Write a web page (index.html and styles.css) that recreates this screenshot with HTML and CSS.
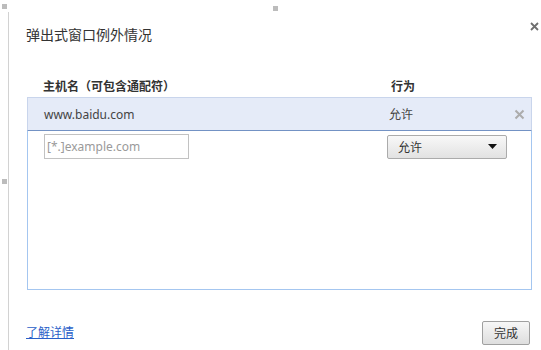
FILE: index.html
```html
<!DOCTYPE html>
<html lang="zh-CN">
<head>
<meta charset="utf-8">
<title>弹出式窗口例外情况</title>
<link rel="stylesheet" href="styles.css">
</head>
<body>
<span class="handle handle-tl"></span>
<span class="handle handle-top"></span>
<span class="handle handle-left"></span>
<div class="frame">
  <div class="title">弹出式窗口例外情况</div>
  <button class="close" aria-label="关闭">
    <svg width="9" height="9" viewBox="0 0 9 9"><path d="M1 1L8 8M8 1L1 8" stroke="#6f6f6f" stroke-width="1.8"/></svg>
  </button>
  <div class="head">
    <span>主机名（可包含通配符）</span>
    <span>行为</span>
  </div>
  <div class="list">
    <div class="row selected">
      <span class="host">www.baidu.com</span>
      <span class="act">允许</span>
      <span class="del">
        <svg width="11" height="11" viewBox="0 0 11 11"><path d="M1.5 1.5L9.5 9.5M9.5 1.5L1.5 9.5" stroke="#acacac" stroke-width="2"/></svg>
      </span>
    </div>
    <div class="rest">
      <div class="row edit">
        <input class="field" type="text" placeholder="[*.]example.com">
        <div class="select">
          <span>允许</span>
          <svg width="9" height="5" viewBox="0 0 9 5"><path d="M0 0H9L4.5 5Z" fill="#111"/></svg>
        </div>
      </div>
    </div>
  </div>
  <div class="foot">
    <a class="link" href="#">了解详情</a>
    <button class="done">完成</button>
  </div>
</div>
</body>
</html>
```
FILE: styles.css
```css
* { box-sizing: border-box; }
html, body {
  margin: 0;
  padding: 0;
  width: 541px;
  height: 350px;
  overflow: hidden;
  background: #fff;
  font-family: "Noto Sans", "Noto Sans CJK SC", sans-serif;
  color: #333;
  font-size: 12px;
}
body { padding-top: 12px; }
.handle {
  position: absolute;
  width: 5px;
  height: 5px;
  background: #bcbcbc;
}
.handle-tl { left: 2px; top: 4px; }
.handle-top { left: 273px; top: 6px; }
.handle-left { left: 2px; top: 179px; }

.frame {
  position: relative;
  margin-left: 8px;
  height: 338px;
  border-left: 1px solid #d2d2d2;
  padding: 13px 10px 0 17px;
}
.title {
  line-height: 20px;
  font-size: 14px;
  color: #333;
}
.close {
  position: absolute;
  right: 1px;
  top: 9px;
  width: 11px;
  height: 11px;
  padding: 0;
  border: 0;
  background: none;
  display: flex;
  align-items: center;
  justify-content: center;
}
.head {
  margin-top: 33px;
  line-height: 17px;
  padding-left: 17px;
  display: grid;
  grid-template-columns: 348px 1fr;
  font-weight: 700;
  color: #333;
}
.list {
  margin: 2px 0 0 1px;
  width: 505px;
}
.row {
  display: grid;
  grid-template-columns: 343px 1fr 20px;
  align-items: center;
  padding-left: 16px;
}
.selected {
  height: 34px;
  background: #e5ebf8;
  border: 1px solid #c9d5ec;
  border-bottom-color: #7392c4;
  color: #444;
}
.act { padding-left: 2px; }
.del { display: flex; align-items: center; padding-left: 3px; }
.rest {
  height: 159px;
  border: 1px solid #a4c6f0;
  border-top: 0;
  padding-top: 3px;
}
.edit {
  grid-template-columns: 343px 120px;
  padding-left: 16px;
}
.field {
  width: 145px;
  height: 25px;
  border: 1px solid #c2c2c2;
  padding: 0 0 0 2px;
  font: inherit;
  font-size: 12px;
  color: #333;
  outline: none;
}
.field::placeholder { color: #9a9a9a; }
.select {
  width: 120px;
  height: 24px;
  border: 1px solid #ababab;
  border-radius: 2px;
  background: linear-gradient(#f8f8f8, #e2e2e2);
  display: flex;
  align-items: center;
  justify-content: space-between;
  padding: 0 9px 0 10px;
  color: #333;
}
.foot {
  margin-top: 31px;
  display: flex;
  justify-content: space-between;
  align-items: center;
  width: 505px;
}
.link {
  color: #2a5fc8;
  text-decoration: underline;
  line-height: 16px;
}
.done {
  width: 48px;
  height: 24px;
  margin-right: 1px;
  border: 1px solid #a0a0a0;
  border-radius: 2px;
  background: linear-gradient(#f7f7f7, #dedede);
  font: inherit;
  font-size: 12px;
  color: #333;
  padding: 0;
}
```
